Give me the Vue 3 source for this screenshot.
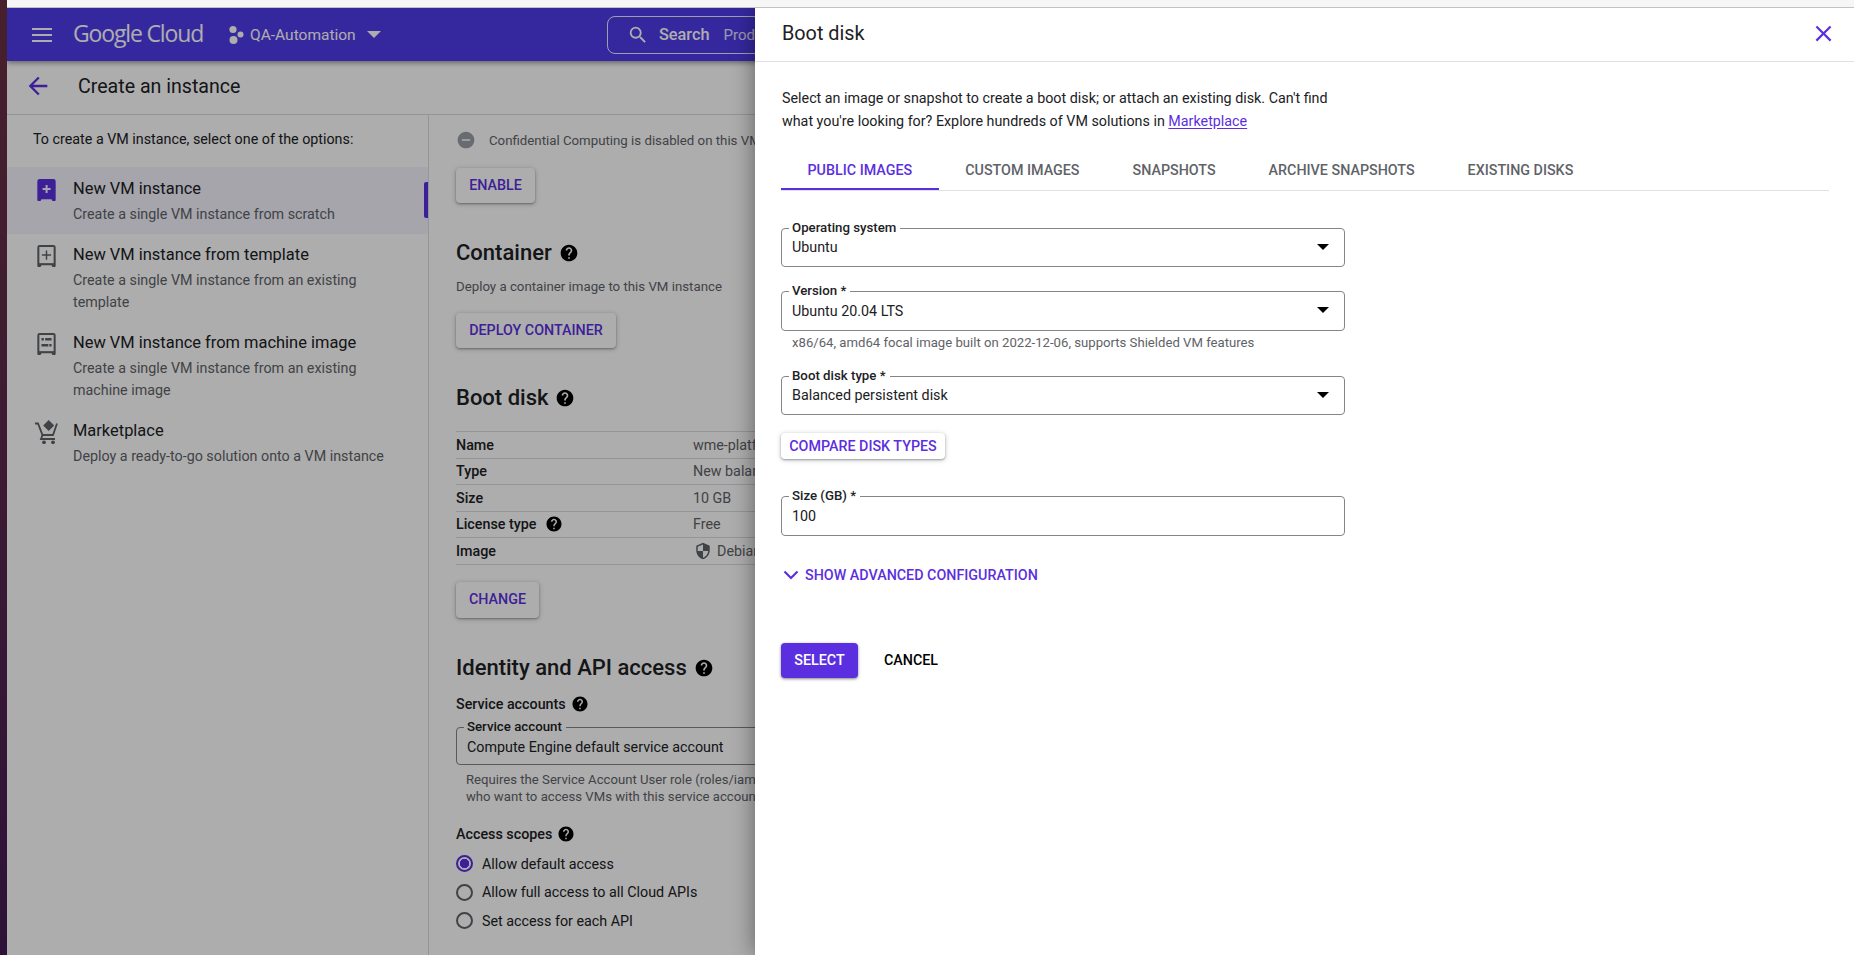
<template>
  <div class="screen">
    <div class="desktop-edge"></div>
    <div class="window">
      <div class="browser-edge"></div>
      <div class="page">
        <header class="topbar">
          <div class="burger"><span></span><span></span><span></span></div>
          <div class="logo">Google Cloud</div>
          <svg class="project-icon" viewBox="0 0 16 20">
            <circle cx="5" cy="4.5" r="3.6" />
            <circle cx="12.5" cy="9.5" r="3" />
            <circle cx="5.5" cy="15" r="4" />
          </svg>
          <div class="project">QA-Automation</div>
          <div class="caret"></div>
          <div class="search">
            <svg viewBox="0 0 24 24" class="search-icon"><path :d="icons.search" /></svg>
            <span class="search-label">Search</span>
            <span class="search-hint">Products, resources, docs (/)</span>
          </div>
        </header>

        <div class="subbar">
          <svg viewBox="0 0 24 24" class="back"><path :d="icons.back" /></svg>
          <h1>Create an instance</h1>
        </div>

        <div class="body">
          <nav class="nav">
            <p class="nav-intro">To create a VM instance, select one of the options:</p>
            <div class="nav-item active">
              <svg class="nav-icon" viewBox="0 0 20 24">
                <path :d="icons.vmBody" />
                <path d="M9 6.5h2.2v3.3h3.3V12h-3.3v3.3H9V12H5.7V9.8H9z" class="plus-light" />
              </svg>
              <div>
                <div class="nav-title">New VM instance</div>
                <div class="nav-sub">Create a single VM instance from scratch</div>
              </div>
            </div>
            <div class="nav-item">
              <svg class="nav-icon" viewBox="0 0 20 24">
                <path :d="icons.vmBody" />
                <rect x="2.2" y="2.2" width="15.6" height="17.6" class="inner" />
                <path d="M9.2 6h1.6v4.2H15v1.6h-4.2V16H9.2v-4.2H5v-1.6h4.2z" />
              </svg>
              <div>
                <div class="nav-title">New VM instance from template</div>
                <div class="nav-sub">Create a single VM instance from an existing<br />template</div>
              </div>
            </div>
            <div class="nav-item">
              <svg class="nav-icon" viewBox="0 0 20 24">
                <path :d="icons.vmBody" />
                <rect x="2.2" y="2.2" width="15.6" height="17.6" class="inner" />
                <path d="M4.5 5.5h2.6v2.6H4.5zM8.5 5.5h7v2.6h-7zM4.5 12h7.5v2.6H4.5zM13 12h2.5v2.6H13z" />
              </svg>
              <div>
                <div class="nav-title">New VM instance from machine image</div>
                <div class="nav-sub">Create a single VM instance from an existing<br />machine image</div>
              </div>
            </div>
            <div class="nav-item">
              <svg class="nav-icon cart" viewBox="0 0 24 24">
                <path d="M14.7 0l5.5 5.5-5.5 5.5-5.5-5.5z" />
                <path d="M1 3.5h3L8.5 15H19l4-11.5" class="cart-line" />
                <path d="M8.5 15L7 19h14" class="cart-line" />
                <circle cx="10" cy="22.3" r="1.9" />
                <circle cx="19" cy="22.3" r="1.9" />
              </svg>
              <div>
                <div class="nav-title">Marketplace</div>
                <div class="nav-sub">Deploy a ready-to-go solution onto a VM instance</div>
              </div>
            </div>
          </nav>

          <main class="content">
            <div class="confidential">
              <svg viewBox="0 0 24 24"><path :d="icons.remove" /></svg>
              <span>Confidential Computing is disabled on this VM instance</span>
            </div>
            <button class="raised enable">ENABLE</button>

            <h2 class="first-head">Container <svg viewBox="0 0 24 24" class="help"><path :d="icons.help" /></svg></h2>
            <p class="muted deploy">Deploy a container image to this VM instance</p>
            <button class="raised deploy-btn">DEPLOY CONTAINER</button>

            <h2 class="boot-head">Boot disk <svg viewBox="0 0 24 24" class="help"><path :d="icons.help" /></svg></h2>
            <div class="table">
              <div v-for="row in diskRows" :key="row.name" class="row">
                <div class="row-name">
                  {{ row.name }}
                  <svg v-if="row.help" viewBox="0 0 24 24" class="help"><path :d="icons.help" /></svg>
                </div>
                <div class="row-value">
                  <svg v-if="row.shield" viewBox="0 0 24 24" class="shield"><path :d="icons.shield" /></svg>
                  {{ row.value }}
                </div>
              </div>
            </div>
            <button class="raised change">CHANGE</button>

            <h2 class="identity-head">Identity and API access <svg viewBox="0 0 24 24" class="help"><path :d="icons.help" /></svg></h2>
            <div class="small-head accounts">Service accounts <svg viewBox="0 0 24 24" class="help"><path :d="icons.help" /></svg></div>
            <div class="field account-field">
              <label>Service account</label>
              <span>Compute Engine default service account</span>
            </div>
            <p class="hint account-hint">
              Requires the Service Account User role (roles/iam.serviceAccountUser) to be set for users<br />
              who want to access VMs with this service account.
            </p>
            <div class="small-head scopes">Access scopes <svg viewBox="0 0 24 24" class="help"><path :d="icons.help" /></svg></div>
            <div v-for="(scope, i) in scopes" :key="scope" class="radio-row">
              <span class="radio" :class="{ on: i === 0 }"></span>{{ scope }}
            </div>
          </main>
        </div>

        <div class="scrim"></div>

        <aside class="panel">
          <div class="panel-head">
            <h3>Boot disk</h3>
            <svg viewBox="0 0 24 24" class="close"><path :d="icons.close" /></svg>
          </div>
          <div class="panel-body">
            <p class="panel-intro">
              Select an image or snapshot to create a boot disk; or attach an existing disk. Can't find<br />
              what you're looking for? Explore hundreds of VM solutions in <a>Marketplace</a>
            </p>
            <div class="tabs">
              <div v-for="(tab, i) in tabs" :key="tab" class="tab" :class="{ selected: i === 0 }">{{ tab }}</div>
            </div>

            <div class="field select first-field">
              <label>Operating system</label>
              <span>Ubuntu</span>
              <i class="arrow"></i>
            </div>
            <div class="field select version-field">
              <label>Version *</label>
              <span>Ubuntu 20.04 LTS</span>
              <i class="arrow"></i>
            </div>
            <p class="hint version-hint">x86/64, amd64 focal image built on 2022-12-06, supports Shielded VM features</p>
            <div class="field select">
              <label>Boot disk type *</label>
              <span>Balanced persistent disk</span>
              <i class="arrow"></i>
            </div>
            <button class="raised compare">COMPARE DISK TYPES</button>
            <div class="field size-field">
              <label>Size (GB) *</label>
              <span>100</span>
            </div>
            <div class="advanced">
              <svg viewBox="0 0 16 10"><path d="M1.5 1.5L8 8l6.5-6.5" /></svg>
              SHOW ADVANCED CONFIGURATION
            </div>
            <div class="actions">
              <button class="primary">SELECT</button>
              <button class="flat">CANCEL</button>
            </div>
          </div>
        </aside>
      </div>
    </div>
  </div>
</template>

<script setup>
const icons = {
  search: 'M15.5 14h-.79l-.28-.27A6.47 6.47 0 0 0 16 9.5 6.5 6.5 0 1 0 9.5 16c1.61 0 3.09-.59 4.23-1.57l.27.28v.79l5 4.99L20.49 19l-4.99-5zm-6 0C7.01 14 5 11.99 5 9.5S7.01 5 9.5 5 14 7.01 14 9.5 11.99 14 9.5 14z',
  back: 'M20 11H7.83l5.59-5.59L12 4l-8 8 8 8 1.41-1.41L7.83 13H20v-2z',
  help: 'M12 2C6.48 2 2 6.48 2 12s4.48 10 10 10 10-4.48 10-10S17.52 2 12 2zm1 17h-2v-2h2v2zm2.07-7.75l-.9.92C13.45 12.9 13 13.5 13 15h-2v-.5c0-1.1.45-2.1 1.17-2.83l1.24-1.26c.37-.36.59-.86.59-1.41 0-1.1-.9-2-2-2s-2 .9-2 2H8c0-2.21 1.79-4 4-4s4 1.79 4 4c0 .88-.36 1.68-.93 2.25z',
  remove: 'M12 2C6.48 2 2 6.48 2 12s4.48 10 10 10 10-4.48 10-10S17.52 2 12 2zm5 11H7v-2h10v2z',
  shield: 'M12 1L3 5v6c0 5.55 3.84 10.74 9 12 5.16-1.26 9-6.45 9-12V5l-9-4zm0 10.99h7c-.53 4.12-3.28 7.79-7 8.94V12H5V6.3l7-3.11v8.8z',
  close: 'M19 6.41L17.59 5 12 10.59 6.41 5 5 6.41 10.59 12 5 17.59 6.41 19 12 13.41 17.59 19 19 17.59 13.41 12z',
  vmBody: 'M2.5 0h15A2.5 2.5 0 0 1 20 2.5V23a1 1 0 0 1-1 1h-2.5l-1-2h-11l-1 2H1a1 1 0 0 1-1-1V2.5A2.5 2.5 0 0 1 2.5 0z'
}

const diskRows = [
  { name: 'Name', value: 'wme-platform-boot' },
  { name: 'Type', value: 'New balanced persistent disk' },
  { name: 'Size', value: '10 GB' },
  { name: 'License type', value: 'Free', help: true },
  { name: 'Image', value: 'Debian GNU/Linux 11 (bullseye)', shield: true }
]

const scopes = ['Allow default access', 'Allow full access to all Cloud APIs', 'Set access for each API']

const tabs = ['PUBLIC IMAGES', 'CUSTOM IMAGES', 'SNAPSHOTS', 'ARCHIVE SNAPSHOTS', 'EXISTING DISKS']
</script>

<style>
body {
  margin: 0;
  background: #fff;
}
</style>

<style scoped>
.screen {
  display: flex;
  width: 1854px;
  height: 955px;
  overflow: hidden;
  font-family: Roboto, "Liberation Sans", sans-serif;
  font-size: 14.3px;
  color: #202124;
}

.desktop-edge {
  width: 7px;
  flex: none;
  background: linear-gradient(180deg, #47202c 0%, #3e1b33 45%, #2d1238 100%);
}

.window {
  flex: 1;
  display: flex;
  flex-direction: column;
  min-width: 0;
}

.browser-edge {
  height: 7px;
  flex: none;
  background: #f6f6f6;
  border-bottom: 1px solid #c2c2c2;
}

.page {
  position: relative;
  flex: 1;
  overflow: hidden;
  background: #fff;
}

/* top bar */
.topbar {
  display: flex;
  align-items: center;
  height: 53px;
  background: #4f3bea;
  box-shadow: 0 2px 5px rgba(0, 0, 0, 0.4);
  position: relative;
  color: #fff;
}

.burger {
  display: flex;
  flex-direction: column;
  gap: 4px;
  width: 20px;
  margin-left: 25px;
}

.burger span {
  height: 2px;
  background: #fff;
}

.logo {
  margin: -4px 0 0 21px;
  width: 133px;
  font-family: "Open Sans", sans-serif;
  font-size: 23px;
  letter-spacing: -1.15px;
  white-space: nowrap;
}

.project-icon {
  width: 16px;
  height: 20px;
  margin-left: 22px;
  fill: #fff;
}

.project {
  margin-left: 6px;
  font-size: 15.5px;
  width: 112px;
  white-space: nowrap;
}

.caret {
  width: 0;
  height: 0;
  border-left: 7px solid transparent;
  border-right: 7px solid transparent;
  border-top: 7px solid #fff;
  margin-left: 5px;
}

.search {
  display: flex;
  align-items: center;
  box-sizing: border-box;
  width: 300px;
  height: 38px;
  margin-left: 226px;
  flex: none;
  border: 1px solid rgba(255, 255, 255, 0.9);
  border-radius: 8px;
  white-space: nowrap;
  overflow: hidden;
}

.search-icon {
  width: 22px;
  height: 22px;
  flex: none;
  margin-left: 19px;
  fill: #fff;
}

.search-label {
  margin-left: 10px;
  font-size: 16.3px;
  font-weight: 500;
}

.search-hint {
  margin-left: 14px;
  font-size: 15px;
  color: #e4e1ff;
}

/* sub bar */
.subbar {
  display: flex;
  align-items: center;
  box-sizing: border-box;
  height: 54px;
  padding-bottom: 3px;
  border-bottom: 1px solid #dadce0;
}

.back {
  width: 28px;
  height: 28px;
  margin-left: 17px;
  fill: #5b2fe0;
}

.subbar h1 {
  margin: 0 0 0 26px;
  font-size: 19.6px;
  font-weight: 400;
}

/* left nav */
.body {
  display: flex;
  height: 840px;
}

.nav {
  width: 421px;
  flex: none;
  padding-top: 13px;
  box-sizing: content-box;
  border-right: 1px solid #dadce0;
}

.nav-intro {
  margin: 0 0 18px 26px;
  line-height: 22px;
}

.nav-item {
  display: flex;
  position: relative;
  padding: 10px 0 9px 30px;
}

.nav-item.active {
  margin-top: -1px;
  padding-top: 11px;
  background: #f3f3fd;
}

.nav-item.active::after {
  content: "";
  position: absolute;
  right: 0;
  top: 15px;
  width: 4px;
  height: 36px;
  background: #5b2fe0;
  border-radius: 2px 0 0 2px;
}

.nav-icon {
  width: 19px;
  height: 22px;
  margin: 1px 17px 0 0;
  flex: none;
  fill: #5f6368;
}

.active .nav-icon {
  fill: #5b2fe0;
}

.plus-light {
  fill: #f3f3fd;
}

.nav-icon .inner {
  fill: #fff;
}

.nav-icon.cart {
  width: 24px;
  height: 24px;
  margin: 0 15px 0 -3px;
}

.cart-line {
  fill: none;
  stroke: #5f6368;
  stroke-width: 1.8;
}

.nav-title {
  font-size: 16.45px;
  line-height: 22px;
  margin-bottom: 3px;
  white-space: nowrap;
}

.nav-sub {
  line-height: 22px;
  color: #5f6368;
  white-space: nowrap;
}

/* main form behind the panel */
.content {
  padding: 15px 0 0 27px;
  flex: none;
  width: 299px;
  overflow: hidden;
  white-space: nowrap;
}

.confidential {
  display: flex;
  align-items: center;
  height: 20px;
  font-size: 13.25px;
  color: #5f6368;
}

.confidential svg {
  width: 20px;
  height: 20px;
  margin: 0 13px 0 0;
  flex: none;
  fill: #9aa0a6;
}

.raised {
  display: block;
  border: 0;
  padding: 0 0 2px;
  background: #fff;
  border-radius: 4px;
  color: #5b2fe0;
  font: 500 14.3px Roboto, sans-serif;
  box-shadow: 0 1px 2px rgba(60, 64, 67, 0.4), 0 1px 4px 1px rgba(60, 64, 67, 0.2);
}

.enable {
  margin-top: 18px;
  width: 79px;
  height: 35px;
}

h2 {
  margin: 0;
  height: 30px;
  line-height: 30px;
  display: flex;
  align-items: center;
  font-size: 22px;
  font-weight: 500;
  gap: 7px;
}

.help {
  width: 20px;
  height: 20px;
  fill: #000;
  flex: none;
}

.first-head {
  margin-top: 35px;
}

.muted {
  margin: 9px 0 0;
  line-height: 20px;
  font-size: 13.25px;
  color: #5f6368;
}

.deploy-btn {
  margin-top: 16px;
  width: 160px;
  height: 35px;
}

.boot-head {
  margin-top: 35px;
}

.table {
  margin-top: 18px;
  border-top: 1px solid #dadce0;
}

.row {
  display: flex;
  align-items: center;
  height: 25.5px;
  border-bottom: 1px solid #dadce0;
}

.row-name {
  display: flex;
  align-items: center;
  gap: 9px;
  width: 237px;
  flex: none;
  font-weight: 500;
}

.row-name .help {
  width: 18px;
  height: 18px;
}

.row-value {
  display: flex;
  align-items: center;
  gap: 5px;
  color: #5f6368;
}

.shield {
  width: 18px;
  height: 18px;
  fill: #5f6368;
  margin-left: 1px;
}

.change {
  margin-top: 17px;
  width: 83px;
  height: 36px;
}

.identity-head {
  margin-top: 35px;
}

.small-head {
  display: flex;
  align-items: center;
  gap: 5px;
  height: 20px;
  font-weight: 500;
}

.small-head .help {
  width: 18px;
  height: 18px;
}

.accounts {
  margin-top: 11px;
}

.field {
  position: relative;
  box-sizing: border-box;
  height: 39px;
  width: 564px;
  border: 1px solid #80868b;
  border-radius: 4px;
  padding: 9px 10px 0;
  line-height: 20px;
}

.field.select {
  padding-top: 8px;
}

.field label {
  position: absolute;
  top: -9px;
  left: 7px;
  padding: 0 4px 0 3px;
  background: #fff;
  font-size: 13.25px;
  line-height: 15px;
  font-weight: 500;
}

.account-field {
  margin-top: 13px;
  height: 38px;
  width: 700px;
}

.hint {
  margin: 0;
  font-size: 13.15px;
  line-height: 17px;
  color: #5f6368;
}

.account-hint {
  margin: 6px 0 0 10px;
}

.scopes {
  margin-top: 19px;
}

.radio-row {
  display: flex;
  align-items: center;
  height: 28.5px;
}

.scopes + .radio-row {
  margin-top: 6px;
}

.radio {
  box-sizing: border-box;
  width: 17px;
  height: 17px;
  border: 2px solid #5f6368;
  border-radius: 50%;
  margin-right: 9px;
  flex: none;
}

.radio.on {
  border-color: #5b2fe0;
  background: radial-gradient(circle, #5b2fe0 0 4.4px, transparent 5px);
}

.scrim {
  position: absolute;
  inset: 0;
  background: rgba(0, 0, 0, 0.32);
}

/* side panel */
.panel {
  position: absolute;
  top: 0;
  left: 748px;
  right: 0;
  bottom: 0;
  background: #fff;
  box-shadow: 0 0 22px rgba(0, 0, 0, 0.45);
  white-space: nowrap;
}

.panel-head {
  display: flex;
  align-items: center;
  justify-content: space-between;
  box-sizing: border-box;
  height: 54px;
  padding: 0 17px 3px 27px;
  border-bottom: 1px solid #e0e0e0;
}

.panel-head h3 {
  margin: 0;
  font-size: 19.8px;
  font-weight: 400;
}

.close {
  width: 27px;
  height: 27px;
  fill: #5b2fe0;
  margin-top: 1px;
}

.panel-body {
  padding: 25px 25px 0 26px;
}

.panel-intro {
  margin: 0 0 0 1px;
  line-height: 22.5px;
}

.panel-intro a {
  color: #5b2fe0;
  text-decoration: underline;
  text-underline-offset: 2px;
}

.tabs {
  display: flex;
  margin-top: 17px;
  border-bottom: 1px solid #e0e0e0;
}

.tab {
  box-sizing: border-box;
  height: 41px;
  line-height: 42px;
  padding: 0 26.5px;
  font-weight: 500;
  color: #5f6368;
}

.tab.selected {
  color: #5b2fe0;
  border-bottom: 2px solid #5b2fe0;
}

.arrow {
  position: absolute;
  right: 15px;
  top: 15px;
  width: 0;
  height: 0;
  border-left: 6px solid transparent;
  border-right: 6px solid transparent;
  border-top: 6px solid #000;
}

.first-field {
  margin-top: 37px;
}

.field.version-field {
  margin-top: 24px;
  height: 40px;
  padding-top: 9px;
}

.version-hint {
  margin: 3px 0 25px 11px;
  line-height: 17px;
}

.compare {
  margin-top: 18px;
  width: 164px;
  height: 26px;
  padding: 0;
}

.size-field {
  margin-top: 37px;
  height: 40px;
}

.advanced {
  display: flex;
  align-items: center;
  gap: 6px;
  margin-top: 29px;
  height: 20px;
  font-weight: 500;
  color: #5b2fe0;
}

.advanced svg {
  width: 16px;
  height: 10px;
  margin-left: 2px;
  fill: none;
  stroke: #5b2fe0;
  stroke-width: 2.2;
}

.actions {
  display: flex;
  align-items: center;
  gap: 26px;
  margin-top: 58px;
}

.actions button {
  border: 0;
  font: 500 14.3px Roboto, sans-serif;
  padding: 0 0 2px;
}

.primary {
  width: 77px;
  height: 35px;
  background: #5b2fe0;
  color: #fff;
  border-radius: 4px;
  box-shadow: 0 1px 2px rgba(60, 64, 67, 0.4), 0 1px 3px 1px rgba(60, 64, 67, 0.2);
}

.flat {
  background: none;
  color: #000;
}
</style>
